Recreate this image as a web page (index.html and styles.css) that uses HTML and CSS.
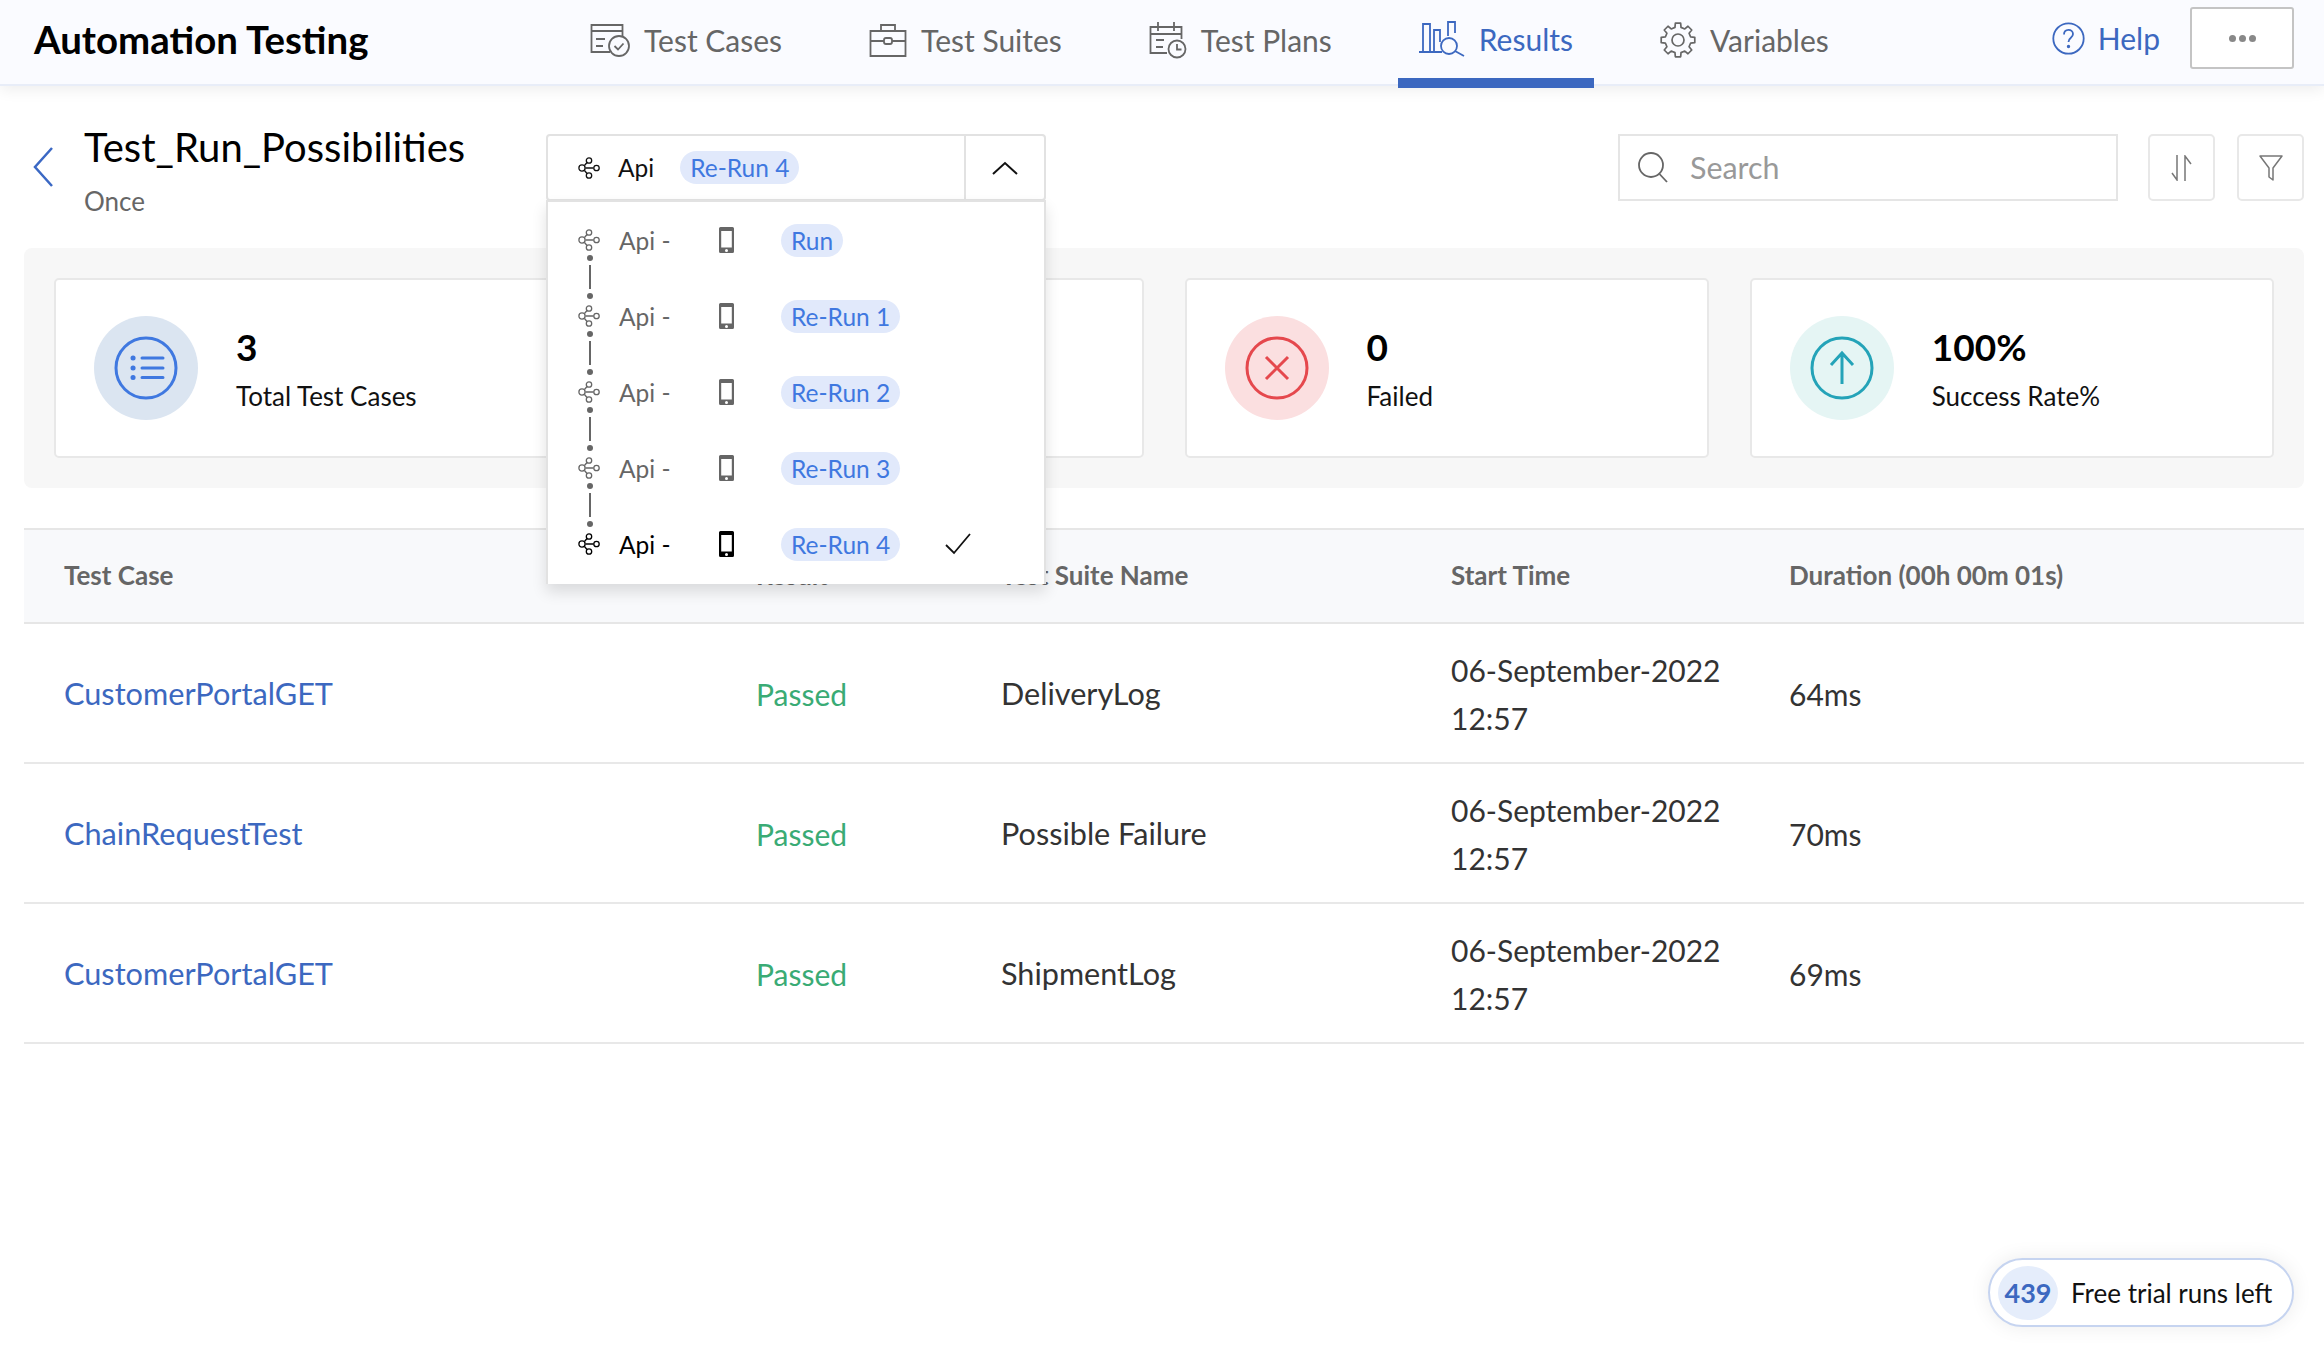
FILE: index.html
```html
<!DOCTYPE html>
<html lang="en">

<head>
	<meta charset="UTF-8">
	<meta name="viewport" content="width=device-width, initial-scale=1.0">
	<title>Automation Testing</title>
	<link rel="stylesheet" href="styles.css">
</head>

<body>
	<svg class="defs" width="0" height="0">
		<symbol id="share" viewBox="0 0 22 22">
			<path d="M6.500 8.500 9 5.500M7.500 11h8M6.500 13.500 9 16.500" fill="none" stroke="currentColor" stroke-width="1.300" />
			<circle cx="4" cy="11" r="3.100" fill="none" stroke="currentColor" stroke-width="1.300" />
			<circle cx="11" cy="3.500" r="2.700" fill="none" stroke="currentColor" stroke-width="1.300" />
			<circle cx="18.500" cy="11" r="2.700" fill="none" stroke="currentColor" stroke-width="1.300" />
			<circle cx="11" cy="18.500" r="2.700" fill="none" stroke="currentColor" stroke-width="1.300" />
		</symbol>
		<symbol id="phone" viewBox="0 0 15 26">
			<path fill-rule="evenodd" fill="currentColor" d="M1.500 0h12A1.500 1.500 0 0 1 15 1.500v23a1.500 1.500 0 0 1-1.500 1.500h-12A1.500 1.500 0 0 1 0 24.500v-23A1.500 1.500 0 0 1 1.500 0zM2.200 4v16.500h10.600V4zM7.500 22a1.500 1.500 0 1 0 0 3 1.500 1.500 0 0 0 0-3z" />
		</symbol>
	</svg>

	<header class="topbar">
		<div class="app-name">Automation Testing</div>
		<nav class="nav">
			<a class="nav-item">
				<svg width="40" height="33" viewBox="0 0 40 33" fill="none" stroke="currentColor" stroke-width="1.800">
					<path d="M20 28H1.500V1h31v12M1.500 7h31M6 15h9M6 22h7" />
					<circle cx="29" cy="22" r="10" />
					<path d="m24.500 22 3.500 3.500 5.500-6" />
				</svg>
				Test Cases
			</a>
			<a class="nav-item">
				<svg width="38" height="34" viewBox="0 0 38 34" fill="none" stroke="currentColor" stroke-width="1.800">
					<path d="M1.500 8h35v25h-35zM12 8V2h14v6M1.500 18H15M23 18h13.500" />
					<rect x="15" y="15" width="8" height="6" rx="2" />
				</svg>
				Test Suites
			</a>
			<a class="nav-item">
				<svg width="38" height="38" viewBox="0 0 38 38" fill="none" stroke="currentColor" stroke-width="1.800">
					<path d="M18 32H1.500V6h31v12M1.500 13h31M9 1v9M25 1v9M7 19h8M7 26h7" />
					<circle cx="28" cy="28" r="8.500" />
					<path d="M28 23v5.500h4.500" />
				</svg>
				Test Plans
			</a>
			<a class="nav-item active">
				<svg width="46" height="36" viewBox="0 0 46 36" fill="none" stroke="currentColor" stroke-width="1.800">
					<path d="M0 31h23M4 31V3h7v28M15 31V9h6v12M29 15V1h7v11" />
					<circle cx="30" cy="25" r="8" />
					<path d="m36 30 9 5" />
				</svg>
				Results
			</a>
			<a class="nav-item">
				<svg width="36" height="36" viewBox="-18 -18 36 36" fill="none" stroke="currentColor" stroke-width="1.700" stroke-linejoin="round">
					<polygon points="12.640,-3.030 16.790,-2.660 16.790,2.660 12.640,3.030 11.080,6.790 13.750,9.990 9.990,13.750 6.790,11.080 3.030,12.640 2.660,16.790 -2.660,16.790 -3.030,12.640 -6.790,11.080 -9.990,13.750 -13.750,9.990 -11.080,6.790 -12.640,3.030 -16.790,2.660 -16.790,-2.660 -12.640,-3.030 -11.080,-6.790 -13.750,-9.990 -9.990,-13.750 -6.790,-11.080 -3.030,-12.640 -2.660,-16.790 2.660,-16.790 3.030,-12.640 6.790,-11.080 9.990,-13.750 13.750,-9.990 11.080,-6.790" />
					<circle r="6" />
				</svg>
				Variables
			</a>
		</nav>
		<div class="top-right">
			<a class="help">
				<svg width="33" height="33" viewBox="0 0 33 33" fill="none" stroke="currentColor" stroke-width="1.800">
					<circle cx="16.500" cy="16.500" r="15.200" />
					<path d="M12 12.500c0-6 9-6 9-.5 0 4-4.500 3.500-4.500 8" />
					<circle cx="16.500" cy="24.500" r=".8" />
				</svg>
				Help
			</a>
			<button class="more-btn"><span></span><span></span><span></span></button>
		</div>
	</header>

	<main class="page">
		<div class="title-row">
			<svg class="back" width="22" height="40" viewBox="0 0 22 40" fill="none" stroke="#3b68c4" stroke-width="2.500">
				<path d="M20 1 3 20l17 19" />
			</svg>
			<div class="title-text">
				<h1>Test_Run_Possibilities</h1>
				<p>Once</p>
			</div>

			<div class="run-select">
				<div class="run-current">
					<svg class="share"><use href="#share" /></svg>
					<span class="api">Api</span>
					<span class="pill">Re-Run 4</span>
				</div>
				<div class="run-toggle">
					<svg width="26" height="14" viewBox="0 0 26 14" fill="none" stroke="#111" stroke-width="2">
						<path d="M1 13 13 2l12 11" />
					</svg>
				</div>
				<ul class="run-menu">
					<li class="run-item linked">
						<svg class="share"><use href="#share" /></svg>
						<span class="api">Api -</span>
						<svg class="phone"><use href="#phone" /></svg>
						<span class="pill">Run</span>
					</li>
					<li class="run-item linked">
						<svg class="share"><use href="#share" /></svg>
						<span class="api">Api -</span>
						<svg class="phone"><use href="#phone" /></svg>
						<span class="pill">Re-Run 1</span>
					</li>
					<li class="run-item linked">
						<svg class="share"><use href="#share" /></svg>
						<span class="api">Api -</span>
						<svg class="phone"><use href="#phone" /></svg>
						<span class="pill">Re-Run 2</span>
					</li>
					<li class="run-item linked">
						<svg class="share"><use href="#share" /></svg>
						<span class="api">Api -</span>
						<svg class="phone"><use href="#phone" /></svg>
						<span class="pill">Re-Run 3</span>
					</li>
					<li class="run-item selected">
						<svg class="share"><use href="#share" /></svg>
						<span class="api">Api -</span>
						<svg class="phone"><use href="#phone" /></svg>
						<span class="pill">Re-Run 4</span>
						<svg class="check" width="26" height="22" viewBox="0 0 26 22" fill="none" stroke="#111" stroke-width="1.800">
							<path d="m1 12 8 8L25 1" />
						</svg>
					</li>
				</ul>
			</div>

			<div class="tools">
				<div class="search">
					<svg width="32" height="32" viewBox="0 0 32 32" fill="none" stroke="#666" stroke-width="1.800">
						<circle cx="14" cy="14" r="12" />
						<path d="m22.500 23 7.500 8" />
					</svg>
					<span>Search</span>
				</div>
				<div class="tool-btns">
					<button class="tool-btn">
						<svg width="22" height="26" viewBox="0 0 22 26" fill="none" stroke="#777" stroke-width="1.500">
							<path d="M6 0v25L1 18M14 26V1l6 8" />
						</svg>
					</button>
					<button class="tool-btn">
						<svg width="24" height="26" viewBox="0 0 24 26" fill="none" stroke="#777" stroke-width="1.500">
							<path d="M1 1h22l-9 12v12l-4-3v-9z" stroke-linejoin="round" />
						</svg>
					</button>
				</div>
			</div>
		</div>

		<section class="stats">
			<div class="card">
				<div class="stat-icon blue">
					<svg width="64" height="64" viewBox="0 0 64 64" fill="none" stroke="#3f78e0" stroke-width="3">
						<circle cx="32" cy="32" r="30" />
						<path d="M28 22h21M28 32h21M28 41.500h21" stroke-linecap="round" />
						<path d="M19 22h.1M19 32h.1M19 41.500h.1" stroke-width="5" stroke-linecap="round" />
					</svg>
				</div>
				<div>
					<div class="stat-num">3</div>
					<div class="stat-label">Total Test Cases</div>
				</div>
			</div>
			<!-- second card sits behind the open run menu -->
			<div class="card"></div>
			<div class="card">
				<div class="stat-icon red">
					<svg width="64" height="64" viewBox="0 0 64 64" fill="none" stroke="#e5484d" stroke-width="3">
						<circle cx="32" cy="32" r="30" />
						<path d="m21 21 22 22M43 21 21 43" />
					</svg>
				</div>
				<div>
					<div class="stat-num">0</div>
					<div class="stat-label">Failed</div>
				</div>
			</div>
			<div class="card">
				<div class="stat-icon teal">
					<svg width="64" height="64" viewBox="0 0 64 64" fill="none" stroke="#24a3b8" stroke-width="3">
						<circle cx="32" cy="32" r="30" />
						<path d="M32 48V17M21 29l11-12 11 12" />
					</svg>
				</div>
				<div>
					<div class="stat-num">100%</div>
					<div class="stat-label">Success Rate%</div>
				</div>
			</div>
		</section>

		<table class="results">
			<thead>
				<tr>
					<th class="col-case">Test Case</th>
					<th class="col-status">Result</th>
					<th class="col-suite">Test Suite Name</th>
					<th class="col-time">Start Time</th>
					<th>Duration (00h 00m 01s)</th>
				</tr>
			</thead>
			<tbody>
				<tr>
					<td class="link">CustomerPortalGET</td>
					<td class="passed">Passed</td>
					<td class="suite">DeliveryLog</td>
					<td>06-September-2022<br>12:57</td>
					<td>64ms</td>
				</tr>
				<tr>
					<td class="link">ChainRequestTest</td>
					<td class="passed">Passed</td>
					<td class="suite">Possible Failure</td>
					<td>06-September-2022<br>12:57</td>
					<td>70ms</td>
				</tr>
				<tr>
					<td class="link">CustomerPortalGET</td>
					<td class="passed">Passed</td>
					<td class="suite">ShipmentLog</td>
					<td>06-September-2022<br>12:57</td>
					<td>69ms</td>
				</tr>
			</tbody>
		</table>
	</main>

	<div class="trial"><b>439</b>Free trial runs left</div>
</body>

</html>
```

FILE: styles.css
```css
* {
	box-sizing: border-box;
}

body {
	margin: 0;
	background-color: #fff;
	color: #111;
	font-family: "Lato", "Liberation Sans", sans-serif;
	min-height: 1358px;
	position: relative;
	overflow: hidden;
}

.defs {
	position: absolute;
}

/* top bar */
.topbar {
	display: flex;
	align-items: stretch;
	height: 86px;
	padding: 0 30px 0 34px;
	background-color: #fafbff;
	border-bottom: 2px solid #e8edf8;
	box-shadow: 0 4px 14px rgba(0, 0, 0, .07);
}

.app-name {
	align-self: center;
	width: 336px;
	margin-top: -6px;
	font-size: 38.400px;
	font-weight: 700;
	color: #000;
}

.nav {
	display: flex;
	gap: 45px;
	margin-left: 199px;
}

.nav-item {
	display: flex;
	align-items: center;
	gap: 14px;
	height: 88px;
	padding: 0 21px 8px;
	font-size: 30px;
	color: #666;
}

.nav-item.active {
	color: #3c68c0;
	border-bottom: 10px solid #3c68c0;
	padding-bottom: 0;
}

.top-right {
	display: flex;
	align-items: center;
	gap: 30px;
	margin-left: auto;
	padding-bottom: 8px;
}

.help {
	display: flex;
	align-items: center;
	gap: 13px;
	font-size: 30px;
	color: #3c68c0;
}

.more-btn {
	display: flex;
	align-items: center;
	justify-content: center;
	gap: 3px;
	width: 104px;
	height: 62px;
	background-color: #fff;
	border: 2px solid #c4c4c4;
	border-radius: 3px;
}

.more-btn span {
	width: 7px;
	height: 7px;
	border-radius: 50%;
	background-color: #888;
}

/* title row */
.page {
	padding: 48px 20px 0 24px;
}

.title-row {
	display: flex;
	align-items: flex-start;
	height: 113px;
}

.back {
	margin: 13px 0 0 8px;
}

.title-text {
	width: 462px;
	margin: -15px 0 0 30px;
}

.title-text h1 {
	margin: 0;
	font-size: 40px;
	font-weight: 400;
	color: #000;
	line-height: 56px;
}

.title-text p {
	margin: 10px 0 0;
	font-size: 26px;
	color: #666;
}

/* run dropdown */
.run-select {
	position: relative;
	display: flex;
	width: 500px;
	height: 67px;
	border: 2px solid #e2e2e2;
	border-radius: 4px;
	background-color: #fff;
	z-index: 5;
}

.run-current {
	flex: 1;
	display: flex;
	align-items: center;
	padding-left: 30px;
	border-right: 2px solid #e2e2e2;
}

.run-toggle {
	display: flex;
	align-items: center;
	justify-content: center;
	width: 78px;
}

.share {
	width: 22px;
	height: 22px;
	flex-shrink: 0;
}

.api {
	margin-left: 18px;
	font-size: 24.500px;
}

.pill {
	display: inline-block;
	height: 33px;
	padding: 0 10px;
	border-radius: 17px;
	background-color: #e1e9fb;
	color: #3f78e0;
	font-size: 24.500px;
	line-height: 33px;
	white-space: nowrap;
}

.run-current .pill {
	margin-left: 26px;
}

.run-menu {
	position: absolute;
	top: 64px;
	left: -2px;
	width: 500px;
	height: 384px;
	margin: 0;
	padding: 0 0 0 30px;
	list-style: none;
	background-color: #fff;
	border: 2px solid #e2e2e2;
	border-bottom: 0;
	box-shadow: 0 8px 14px rgba(0, 0, 0, .12);
}

.run-item {
	position: relative;
	display: flex;
	align-items: center;
	height: 76px;
	color: #666;
}

.run-item .api {
	width: 100px;
	margin-left: 19px;
}

.run-item .pill {
	margin-left: 47px;
}

.phone {
	width: 15px;
	height: 26px;
}

.run-item.selected {
	color: #000;
}

.check {
	margin-left: 45px;
}

/* connector between two runs */
.run-item.linked::after {
	content: "";
	position: absolute;
	left: 11px;
	top: 63px;
	width: 2px;
	height: 24px;
	background-color: #666;
}

.run-item.linked::before {
	content: "";
	position: absolute;
	left: 9px;
	top: 53px;
	width: 6px;
	height: 6px;
	border-radius: 50%;
	background-color: #666;
	box-shadow: 0 38px 0 #666;
	z-index: 1;
}

/* search + buttons */
.tools {
	display: flex;
	gap: 30px;
	margin-left: auto;
}

.tool-btns {
	display: flex;
	gap: 22px;
}

.search {
	display: flex;
	align-items: center;
	gap: 21px;
	width: 500px;
	height: 67px;
	padding: 0 0 2px 17px;
	border: 2px solid #e5e5e5;
	font-size: 30.400px;
	color: #999;
}

.tool-btn {
	display: flex;
	align-items: center;
	justify-content: center;
	width: 67px;
	height: 67px;
	background-color: #fff;
	border: 2px solid #e8e8e8;
	border-radius: 5px;
}

/* stat cards */
.stats {
	display: grid;
	grid-template-columns: repeat(4, 1fr);
	gap: 41px;
	height: 240px;
	margin-top: 1px;
	padding: 30px;
	background-color: #f7f7f7;
	border-radius: 8px;
}

.card {
	display: flex;
	align-items: center;
	gap: 38px;
	padding-left: 38px;
	background-color: #fff;
	border: 2px solid #e8e8e8;
	border-radius: 5px;
}

.stat-icon {
	display: flex;
	align-items: center;
	justify-content: center;
	width: 104px;
	height: 104px;
	border-radius: 50%;
}

.blue {
	background-color: #dbe5f1;
}

.red {
	background-color: #fbdfe0;
}

.teal {
	background-color: #e5f5f4;
}

.stat-num {
	font-size: 37px;
	font-weight: 700;
	color: #000;
	line-height: 46px;
}

.stat-label {
	margin-top: 9px;
	font-size: 26px;
	line-height: 34px;
	color: #111;
}

/* table */
.results {
	width: 100%;
	margin-top: 40px;
	border-collapse: collapse;
	table-layout: fixed;
}

.results th {
	height: 94px;
	padding: 0 0 2px;
	background-color: #f8f9fb;
	border-top: 2px solid #e6e6e6;
	border-bottom: 2px solid #e6e6e6;
	font-size: 26px;
	font-weight: 700;
	color: #666;
	text-align: left;
}

.results th:first-child {
	padding-left: 40px;
}

.col-case {
	width: 732px;
}

.col-status {
	width: 245px;
}

.col-suite {
	width: 450px;
}

.col-time {
	width: 338px;
}

.results td {
	height: 140px;
	padding: 2px 0 0;
	border-bottom: 2px solid #e8e8e8;
	font-size: 30px;
	line-height: 48px;
	color: #333;
}

.results td:first-child {
	padding-left: 40px;
}

.results td.link {
	font-size: 30.700px;
	color: #3c68c0;
}

.results td.suite {
	font-size: 30.600px;
}

.results td.passed {
	color: #3aab75;
}

/* free trial badge */
.trial {
	position: absolute;
	left: 1988px;
	top: 1258px;
	display: flex;
	align-items: center;
	gap: 13px;
	width: 306px;
	height: 69px;
	padding-left: 8px;
	background-color: #fff;
	border: 2px solid #c6d4f0;
	border-radius: 35px;
	box-shadow: 0 0 20px rgba(0, 0, 0, .08);
	font-size: 26px;
	color: #111;
}

.trial b {
	display: flex;
	align-items: center;
	justify-content: center;
	width: 60px;
	height: 54px;
	border-radius: 50%;
	background-color: #e5edfb;
	color: #3c68c0;
	font-size: 27px;
}
```
